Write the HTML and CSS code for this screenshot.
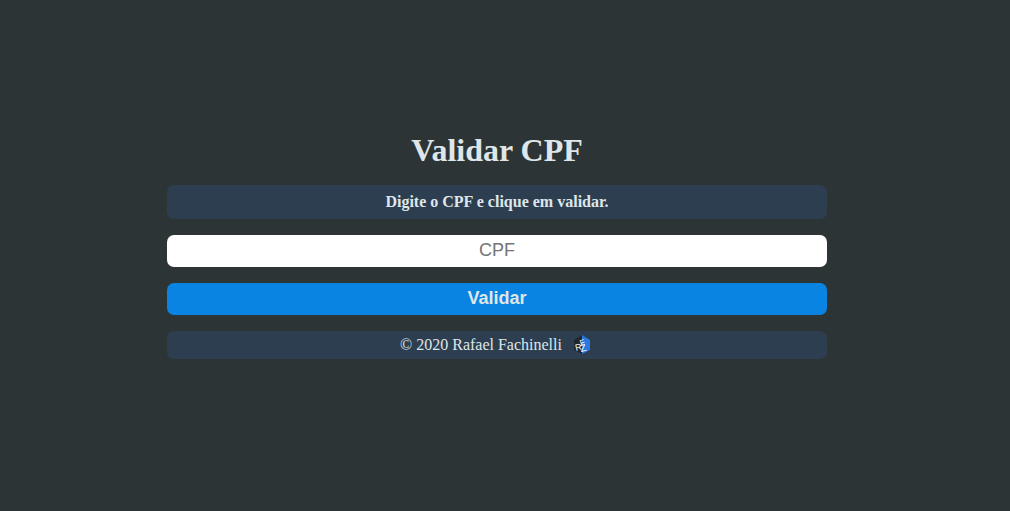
FILE: index.html
```html
<!DOCTYPE html>
<html lang="pt-BR">
<head>
  <meta charset="utf-8">
  <meta name="viewport" content="width=device-width, initial-scale=1">
  <title>Validar CPF</title>
  <link rel="stylesheet" href="styles.css">
</head>
<body class="page">
  <main class="container">
    <h1 class="title">Validar CPF</h1>
    <p class="status" id="status">Digite o CPF e clique em validar.</p>
    <form class="form">
      <input class="field" type="text" placeholder="CPF" aria-label="CPF" aria-describedby="status">
      <button class="submit" type="button">Validar</button>
    </form>
    <footer class="footer">
      <span>© 2020 Rafael Fachinelli</span>
      <svg class="logo" viewBox="0 0 20 20" role="img" aria-label="RFZ">
        <path d="M10 0 L2 5 V15 L10 19 Z" fill="#23272b"/>
        <path d="M10 0 L18 5 V15 L10 19 Z" fill="#2878e0"/>
        <g class="logo-letters">
          <text x="4" y="16" font-size="9" transform="rotate(-14 4 16)">R</text>
          <text x="9" y="11" font-size="8" transform="rotate(-20 9 11)">F</text>
          <text x="9" y="17" font-size="10" transform="rotate(-14 9 17)">Z</text>
        </g>
      </svg>
    </footer>
  </main>
</body>
</html>
```
FILE: styles.css
```css
* {
  box-sizing: border-box;
}

.page {
  display: flex;
  align-items: center;
  justify-content: center;
  min-height: 100vh;
  margin: 0;
  padding: 0 16px 20px 0;
  background: #2d3436;
  color: #dfe6e9;
  font-family: "Liberation Serif", "Times New Roman", serif;
  font-size: 16px;
}

.container,
.form {
  display: flex;
  flex-direction: column;
  gap: 16px;
}

.container {
  width: 100%;
  max-width: 660px;
  text-align: center;
}

.title {
  margin: 0;
  font-size: 32px;
  line-height: 37px;
}

.status,
.footer {
  margin: 0;
  border-radius: 7px;
  background: #2c3e50;
}

.status {
  padding: 8px;
  font-weight: bold;
  line-height: 18px;
}

.field,
.submit {
  width: 100%;
  height: 32px;
  padding: 0 8px 2px;
  border: 0;
  border-radius: 7px;
  font-family: "Liberation Sans", Arial, sans-serif;
  font-size: 18px;
  text-align: center;
}

.field {
  background: #fff;
  color: #2d3436;
}

.field::placeholder {
  color: #757575;
}

.submit {
  background: #0984e3;
  color: #dfe6e9;
  font-weight: bold;
  cursor: pointer;
}

.footer {
  display: flex;
  align-items: center;
  justify-content: center;
  gap: 10px;
  padding: 4px 6px 4px 4px;
  line-height: 20px;
}

.logo {
  width: 20px;
  height: 20px;
}

.logo-letters {
  fill: #fff;
  font-family: "Liberation Sans", Arial, sans-serif;
}
```
